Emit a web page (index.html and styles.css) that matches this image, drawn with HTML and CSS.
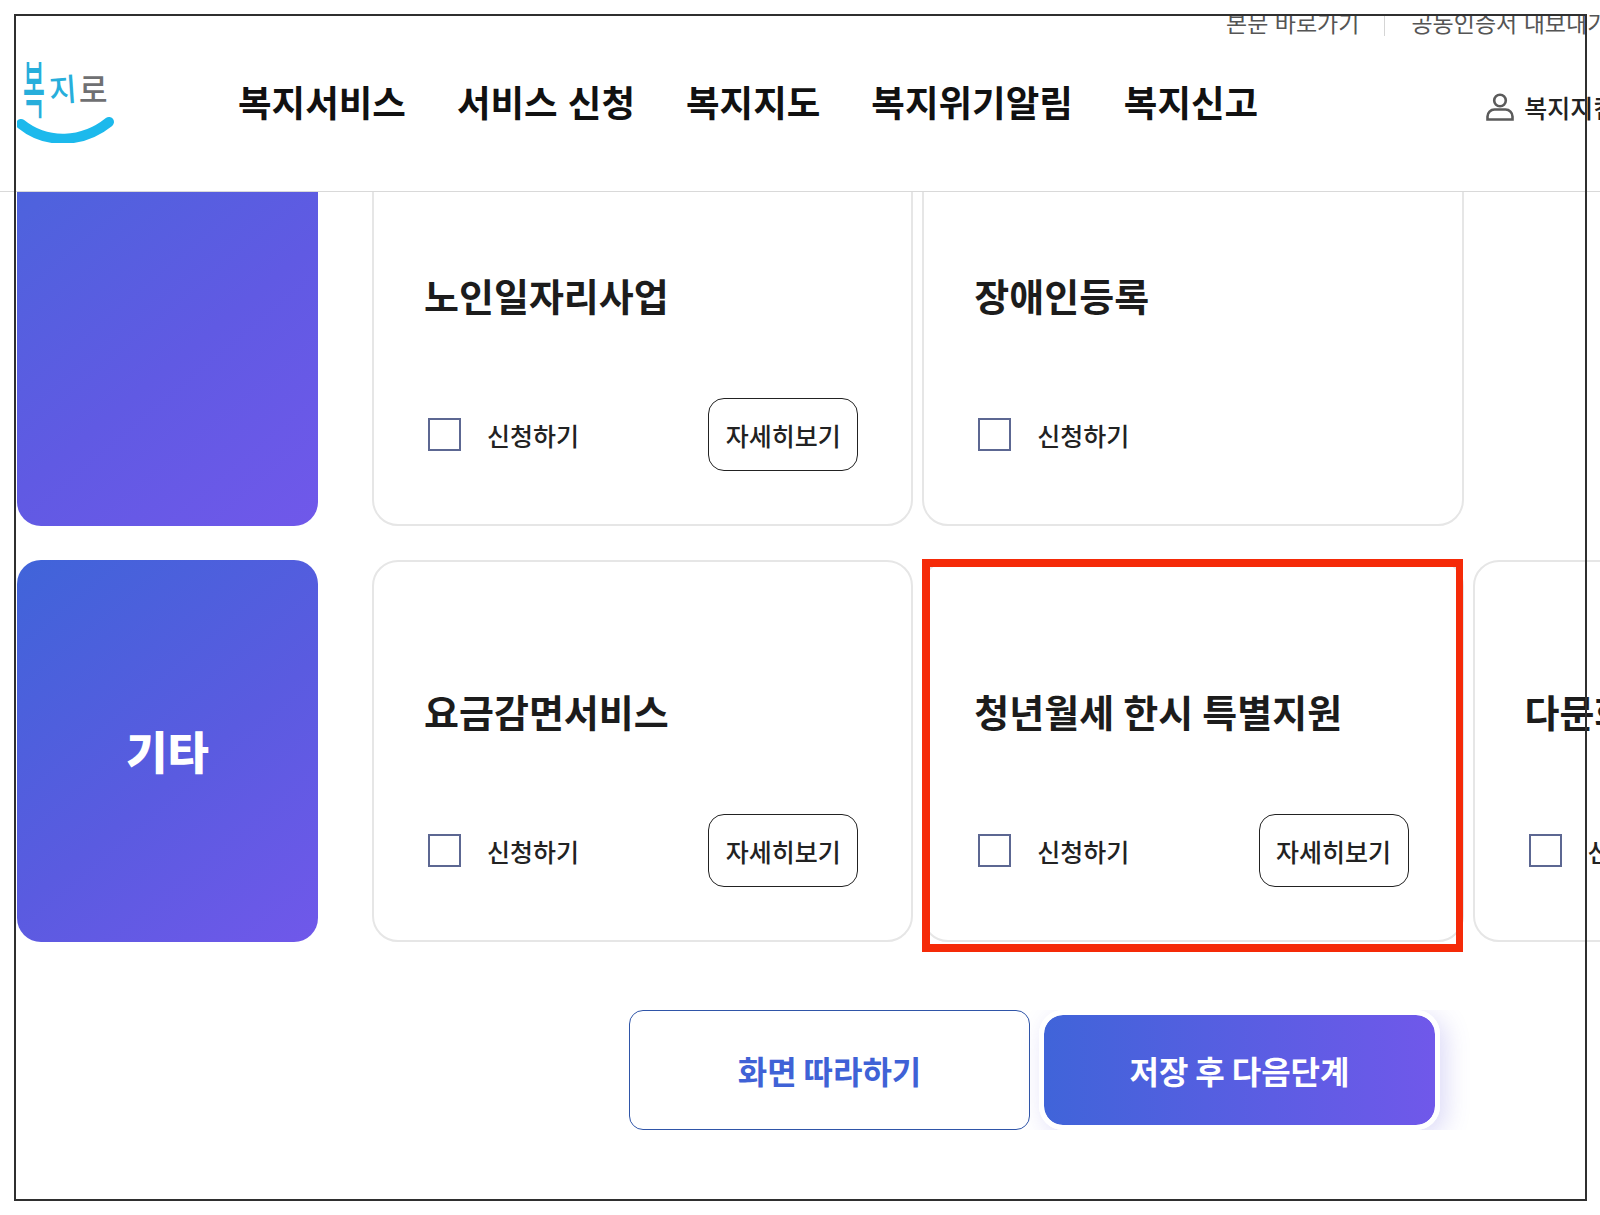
FILE: index.html
```html
<!DOCTYPE html>
<html lang="ko">
<head>
<meta charset="utf-8">
<title>복지로</title>
<link rel="stylesheet" href="styles.css">
</head>
<body>
<div class="viewport">
  <header class="site-header">
    <div class="util">
      <a class="util-link">본문 바로가기</a>
      <span class="util-divider"></span>
      <a class="util-link">공동인증서 내보내기</a>
    </div>
    <div class="header-main">
      <svg class="logo" viewBox="0 0 100 84" width="100" height="84" role="img" aria-label="복지로">
        <text class="logo-text logo-blue" transform="translate(6 54) scale(.88 2.3)" x="0" y="0">복</text>
        <text class="logo-text logo-blue" transform="translate(33 43) rotate(-4) scale(1.1 1.15)" x="0" y="0">지</text>
        <text class="logo-text logo-gray" transform="translate(62 43) scale(1.15 1.22)" x="0" y="0">로</text>
        <path class="logo-smile" d="M4 65 C30 86 66 84 92 63"/>
      </svg>
      <nav class="nav">
        <a class="nav-item">복지서비스</a>
        <a class="nav-item">서비스 신청</a>
        <a class="nav-item">복지지도</a>
        <a class="nav-item">복지위기알림</a>
        <a class="nav-item">복지신고</a>
      </nav>
      <a class="login">
        <svg class="user-icon" viewBox="0 0 28 28" width="28" height="28" aria-hidden="true">
          <circle cx="14" cy="7.5" r="5.8"/>
          <path d="M1.5 26.5v-3a7 7 0 0 1 7-7h11a7 7 0 0 1 7 7v3z"/>
        </svg>
        <span>복지지킴이</span>
      </a>
    </div>
  </header>

  <main class="content">
    <section class="row">
      <div class="panel panel-continued"></div>
      <article class="card">
        <h3 class="card-title">노인일자리사업</h3>
        <div class="card-controls">
          <label class="apply"><span class="checkbox"></span><span>신청하기</span></label>
          <button class="detail-btn">자세히보기</button>
        </div>
      </article>
      <article class="card">
        <h3 class="card-title">장애인등록</h3>
        <div class="card-controls">
          <label class="apply"><span class="checkbox"></span><span>신청하기</span></label>
        </div>
      </article>
    </section>

    <section class="row">
      <div class="panel"><span class="panel-label">기타</span></div>
      <article class="card">
        <h3 class="card-title">요금감면서비스</h3>
        <div class="card-controls">
          <label class="apply"><span class="checkbox"></span><span>신청하기</span></label>
          <button class="detail-btn">자세히보기</button>
        </div>
      </article>
      <article class="card">
        <h3 class="card-title">청년월세 한시 특별지원</h3>
        <div class="card-controls">
          <label class="apply"><span class="checkbox"></span><span>신청하기</span></label>
          <button class="detail-btn">자세히보기</button>
        </div>
        <div class="highlight"></div>
      </article>
      <article class="card">
        <h3 class="card-title">다문화가족지원</h3>
        <div class="card-controls">
          <label class="apply"><span class="checkbox"></span><span>신청하기</span></label>
        </div>
      </article>
    </section>

    <div class="actions">
      <button class="btn btn-outline">화면 따라하기</button>
      <button class="btn btn-primary">저장 후 다음단계</button>
    </div>
  </main>

  <div class="frame"></div>
</div>
</body>
</html>
```

FILE: styles.css
```css
* { box-sizing: border-box; }

html, body {
  margin: 0;
  padding: 0;
  background: #fff;
}

body {
  font-family: "Noto Sans CJK KR", "Noto Sans", sans-serif;
  color: #111;
}

.viewport {
  position: relative;
  width: 1600px;
  height: 1215px;
  overflow: hidden;
  background: #fff;
}

/* Header */
.site-header {
  position: relative;
  z-index: 2;
  height: 192px;
  padding-top: 14px;
  background: #fff;
  border-bottom: 1px solid #d9d9d9;
}

.util {
  display: flex;
  align-items: flex-end;
  height: 22px;
  padding-left: 1226px;
  overflow: hidden;
  white-space: nowrap;
}

.util-link {
  flex: none;
  font-size: 23px;
  line-height: 28px;
  color: #555;
}

.util-divider {
  flex: none;
  width: 1px;
  height: 22px;
  margin: 0 26px 0 25px;
  background: #d5d5d5;
}

.header-main {
  display: flex;
  align-items: center;
  height: 130px;
  padding-left: 17px;
  white-space: nowrap;
}

.logo {
  flex: none;
}

.logo-text {
  font-family: "Noto Sans CJK KR", sans-serif;
  font-size: 27px;
  font-weight: 500;
}

.logo-blue { fill: #27aedb; }
.logo-gray { fill: #6f7072; }

.logo-smile {
  fill: none;
  stroke: #1cb9ec;
  stroke-width: 10;
  stroke-linecap: round;
}

.nav {
  display: flex;
  flex: none;
  gap: 51px;
  margin-left: 121px;
  padding-top: 1px;
}

.nav-item {
  font-size: 36.5px;
  line-height: 50px;
  font-weight: 700;
  color: #111;
}

.login {
  display: flex;
  flex: none;
  align-items: center;
  gap: 10px;
  margin-left: 228px;
  padding-top: 12px;
  font-size: 25px;
  line-height: 32px;
  font-weight: 500;
  color: #222;
}

.user-icon {
  fill: none;
  stroke: #5b5b5b;
  stroke-width: 2.6;
}

/* Content */
.content {
  position: relative;
  z-index: 1;
  margin-top: -48px;
  padding-left: 17px;
}

.row {
  display: flex;
  gap: 9px;
  height: 382px;
  margin-bottom: 34px;
}

.panel {
  display: flex;
  flex: none;
  align-items: center;
  justify-content: center;
  width: 301px;
  margin-right: 45px;
  border-radius: 24px;
  background: linear-gradient(140deg, #4064d9 0%, #5a5be0 55%, #7058ea 100%);
}

.panel-continued {
  background: linear-gradient(140deg, #4a62dc 0%, #4f62dd 12%, #605ae3 55%, #7058ea 100%);
}

.panel-label {
  font-size: 45px;
  line-height: 60px;
  font-weight: 900;
  color: #fff;
}

.card {
  position: relative;
  flex: none;
  width: 541.3px;
  padding: 119px 53px 0 50px;
  border: 2px solid #e6e6e6;
  border-radius: 26px;
  background: #fff;
}

.card-title {
  margin: 0 0 73px;
  font-size: 38px;
  line-height: 60px;
  font-weight: 700;
  color: #1c1c1c;
  word-spacing: -1.5px;
  white-space: nowrap;
}

.card-controls {
  display: flex;
  align-items: center;
  justify-content: space-between;
  height: 73px;
  padding-left: 4px;
}

.apply {
  display: flex;
  align-items: center;
  gap: 26px;
  font-size: 25px;
  line-height: 34px;
  font-weight: 500;
  color: #222;
  white-space: nowrap;
}

.checkbox {
  flex: none;
  width: 33px;
  height: 33px;
  border: 2px solid #5c6792;
  background: #fff;
}

.detail-btn {
  flex: none;
  width: 150px;
  height: 73px;
  padding: 0;
  border: 1.5px solid #222;
  border-radius: 16px;
  background: #fff;
  font-family: inherit;
  font-size: 25px;
  font-weight: 500;
  color: #222;
}

.highlight {
  position: absolute;
  top: -3px;
  left: -2px;
  width: 541px;
  height: 393px;
  border-style: solid;
  border-color: #f52a08;
  border-width: 8px 7px 8px 8px;
  pointer-events: none;
}

/* Bottom actions */
.actions {
  display: flex;
  gap: 9px;
  width: 841px;
  height: 120px;
  margin: 68px 0 0 612px;
  overflow: hidden;
}

.btn {
  flex: none;
  height: 120px;
  font-family: inherit;
  font-size: 32px;
  font-weight: 700;
  word-spacing: -2px;
}

.btn-outline {
  width: 401px;
  border: 1.5px solid #2f55a8;
  border-radius: 14px;
  background: #fff;
  color: #3f62d6;
}

.btn-primary {
  width: 401px;
  border: 5px solid #fff;
  border-radius: 24px;
  background: linear-gradient(90deg, #4064d9 0%, #7058ea 100%) padding-box;
  color: #fff;
  box-shadow: 6px 6px 24px rgba(96, 88, 220, .22);
}

/* Outer window outline */
.frame {
  position: absolute;
  top: 14px;
  left: 14px;
  z-index: 3;
  width: 1573px;
  height: 1187px;
  border: 2px solid #2f2f2f;
  pointer-events: none;
}
```
